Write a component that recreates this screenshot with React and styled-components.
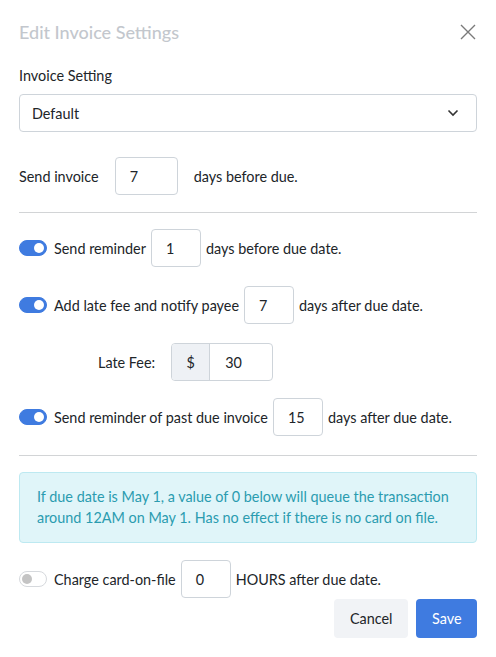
import React from 'react'
import styled, { createGlobalStyle } from 'styled-components'

const GlobalStyle = createGlobalStyle`
  * { box-sizing: border-box; }
  body {
    margin: 0;
    background: #fff;
    font-family: Lato, "Noto Sans", sans-serif;
    color: #212529;
  }
`

const reminders = [
  { id: 1, label: 'Send reminder', value: '1', after: 'days before due date.', on: true },
  { id: 2, label: 'Add late fee and notify payee', value: '7', after: 'days after due date.', on: true },
]

const App = () => {
  return (
    <>
      <GlobalStyle />
      <Modal>
        <Header>
          <Title>Edit Invoice Settings</Title>
          <Close aria-label="close">
            <svg width="16" height="16" viewBox="0 0 16 16">
              <path d="M1 1 L15 15 M15 1 L1 15" stroke="#7a7a7a" strokeWidth="1.4" fill="none" />
            </svg>
          </Close>
        </Header>

        <Label>Invoice Setting</Label>
        <Select>
          <span>Default</span>
          <svg width="12" height="8" viewBox="0 0 12 8">
            <path d="M1.5 1.5 L6 6 L10.5 1.5" stroke="#333" strokeWidth="1.6" fill="none" />
          </svg>
        </Select>

        <Row $gap={16} $top={25}>
          <Text>Send invoice</Text>
          <Box $w={63}>7</Box>
          <Text>days before due.</Text>
        </Row>

        <Divider $top={17} />

        {reminders.map((r, i) => (
          <Row key={r.id} $top={i === 0 ? 16 : 19}>
            <Toggle $on={r.on} />
            <Text>{r.label}</Text>
            <Box>{r.value}</Box>
            <Text>{r.after}</Text>
          </Row>
        ))}

        <Row $top={19} $gap={16} $indent={79}>
          <Text>Late Fee:</Text>
          <Group>
            <Addon>$</Addon>
            <GroupInput>30</GroupInput>
          </Group>
        </Row>

        <Row $top={17}>
          <Toggle $on />
          <Text>Send reminder of past due invoice</Text>
          <Box>15</Box>
          <Text>days after due date.</Text>
        </Row>

        <Divider $top={19} />

        <Alert>
          If due date is May 1, a value of 0 below will queue the transaction
          around 12AM on May 1. Has no effect if there is no card on file.
        </Alert>

        <Row $top={17}>
          <Toggle />
          <Text>Charge card-on-file</Text>
          <Box>0</Box>
          <Text>HOURS after due date.</Text>
        </Row>

        <Footer>
          <Button>Cancel</Button>
          <Button $primary>Save</Button>
        </Footer>
      </Modal>
    </>
  )
}

const Modal = styled.div`
width: 496px;
padding: 20px 19px 19px;
`

const Header = styled.div`
display: flex;
align-items: center;
justify-content: space-between;
height: 24px;
`

const Title = styled.h5`
margin: 0;
font-size: 18px;
font-weight: 500;
color: #c3c7cd;
`

const Close = styled.button`
border: 0;
background: none;
padding: 0;
display: flex;
margin-right: 1px;
`

const Label = styled.div`
margin-top: 21px;
font-size: 14.4px;
line-height: 21px;
`

const Select = styled.div`
margin-top: 8px;
height: 38px;
border: 1px solid #ced4da;
border-radius: 4px;
display: flex;
align-items: center;
justify-content: space-between;
padding: 0 17px 0 12px;
font-size: 14.4px;
`

const Row = styled.div`
margin-top: ${p => p.$top || 0}px;
padding-left: ${p => p.$indent || 0}px;
display: flex;
align-items: center;
gap: ${p => p.$gap || 5}px;
height: 38px;
`

const Text = styled.span`
font-size: 14.4px;
white-space: nowrap;
`

const Box = styled.div`
width: ${p => p.$w || 50}px;
height: 38px;
border: 1px solid #ced4da;
border-radius: 4px;
display: flex;
align-items: center;
padding-left: 14px;
font-size: 14.4px;
`

const Toggle = styled.span`
position: relative;
width: 28px;
height: 16px;
margin-right: 2px;
flex-shrink: 0;
border-radius: 8px;
background: ${p => (p.$on ? '#3f7be0' : '#fff')};
border: 1px solid ${p => (p.$on ? '#3f7be0' : '#d6d9dd')};

&::after {
  content: "";
  position: absolute;
  top: 2px;
  left: ${p => (p.$on ? '14px' : '2px')};
  width: 10px;
  height: 10px;
  border-radius: 50%;
  background: ${p => (p.$on ? '#fff' : '#c4c4c4')};
}
`

const Group = styled.div`
display: flex;
height: 38px;
border: 1px solid #ced4da;
border-radius: 4px;
overflow: hidden;
`

const Addon = styled.div`
width: 38px;
background: #eef1f5;
border-right: 1px solid #ced4da;
display: flex;
align-items: center;
justify-content: center;
font-size: 14.4px;
`

const GroupInput = styled.div`
width: 62px;
display: flex;
align-items: center;
padding-left: 15px;
font-size: 14.4px;
`

const Divider = styled.hr`
margin: ${p => p.$top}px 0 0;
border: 0;
border-top: 1px solid #d2d4d6;
`

const Alert = styled.div`
margin-top: 16px;
padding: 13px 16px 14px 17px;
background: #e0f5f9;
border: 1px solid #bde9f1;
border-radius: 4px;
color: #2b9cb0;
font-size: 14.4px;
line-height: 21px;
`

const Footer = styled.div`
margin-top: 1px;
display: flex;
justify-content: flex-end;
gap: 8px;
`

const Button = styled.button`
height: 39px;
padding: 0 ${p => (p.$primary ? 15.5 : 16)}px;
border: 0;
border-radius: 4px;
font-family: inherit;
font-size: 14.4px;
color: ${p => (p.$primary ? '#fff' : '#212529')};
background: ${p => (p.$primary ? '#3f7be0' : '#f1f3f6')};
`

export default App
